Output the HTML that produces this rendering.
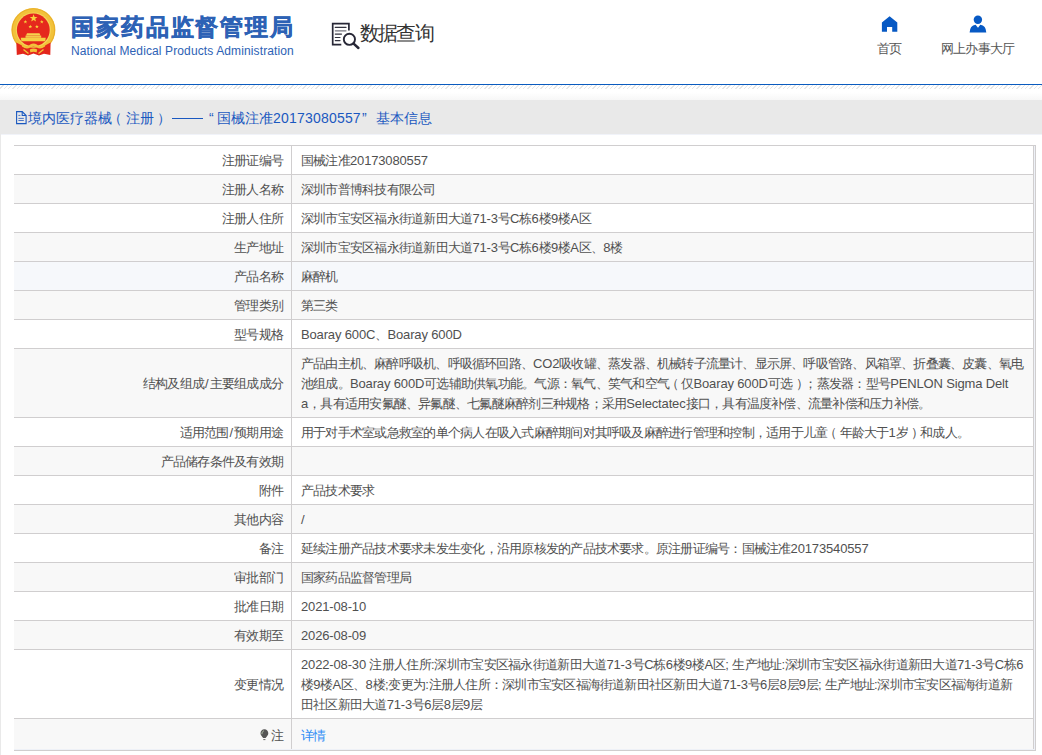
<!DOCTYPE html>
<html><head><meta charset="utf-8">
<style>
*{margin:0;padding:0;box-sizing:border-box}
html,body{width:1042px;height:755px;overflow:hidden;background:#fff}
body{font-family:"Liberation Sans",sans-serif;color:#505050;position:relative}
i{font-style:normal;letter-spacing:-0.15px}
.abs{position:absolute}
#title{left:71px;top:10px;font-size:23px;letter-spacing:1.9px;font-weight:bold;-webkit-text-stroke:0.5px #2d62b5;color:#2d62b5;white-space:nowrap;line-height:34px}
#sub{left:71px;top:43px;font-size:12px;letter-spacing:0.12px;color:#2d62b5;white-space:nowrap;line-height:16px}
#dq{left:359.7px;top:18px;font-size:20px;letter-spacing:-1.6px;color:#333;white-space:nowrap;line-height:30px}
.nav{font-size:13px;letter-spacing:-0.76px;color:#555;white-space:nowrap;line-height:16px}
#blue{left:0;top:84px;width:1042px;height:1px;background:#0a5bbf}
#hatch{left:0;top:85px;width:1042px;height:4px;
 background:repeating-linear-gradient(135deg,#fff 0,#fff 2.1px,#e6e6e6 2.1px,#e6e6e6 3.06px)}
#grad{left:0;top:89px;width:1042px;height:11px;background:linear-gradient(#fff 30%,#f7f7f7)}
#bar{left:0;top:100px;width:1042px;height:34px;background:#e9e9e9}
.bt{top:108px;font-size:14px;color:#1a58c0;white-space:nowrap;line-height:20px}
#bline{left:1px;top:134px;width:1041px;height:1px;background:#f1f3f9}
#lborder{left:0;top:134px;width:1px;height:621px;background:#e9e9e9}
#tbl{background:#eef1f7;left:14px;top:145px;width:1022px;height:606px;border-top:1px solid #d0cecf;border-right:1px solid #d0cecf;border-bottom:1px solid #d0cecf}
.row{position:absolute;background:#fff;left:0;width:1020px;border-bottom:1px solid #d0cecf;font-size:13px;letter-spacing:-0.76px;line-height:20px}
.row.g{background:#f8f8f8}
.row .l{position:absolute;left:0;top:0;width:278px;height:100%;border-right:1px solid #d0cecf;text-align:right;padding:5px 8px 0 0;white-space:nowrap}
.row .v{position:absolute;left:278px;top:0;width:742px;height:100%;border-right:1px solid #d0cecf;padding:5px 0 0 9px;white-space:nowrap}
.row.last{border-bottom:none}
.bulb{display:inline-block;vertical-align:-1px;margin-right:2px}
a{color:#2d8cf5;text-decoration:none}
.row.last .v{padding-top:7px}
b{font-weight:normal}.lp{position:relative;left:-3.5px}.rp{position:relative;left:3.5px}
.row.hv{background:#f6f8fb}

</style></head><body>
<!-- emblem -->
<svg class="abs" style="left:0;top:0" width="64" height="62" viewBox="0 0 64 62">
 <circle cx="33.4" cy="30" r="22" fill="#f2c23a"/>
 <circle cx="33.4" cy="30" r="21.2" fill="none" stroke="#e9ae2a" stroke-width="1"/>
 <circle cx="33.4" cy="30" r="17.6" fill="#f6d257"/>
 <circle cx="33.3" cy="30" r="16.4" fill="#e5281d"/>
 <polygon points="33.6,14.3 34.6,17.0 37.5,17.0 35.2,18.8 36.0,21.6 33.6,19.9 31.2,21.6 32.0,18.8 29.7,17.0 32.6,17.0" fill="#f8d33c"/>
 <polygon points="25.4,20.0 25.9,21.2 27.2,21.2 26.2,22.1 26.6,23.4 25.4,22.6 24.2,23.4 24.6,22.1 23.6,21.2 24.9,21.2" fill="#f8d33c"/>
 <polygon points="41.8,20.0 42.3,21.2 43.6,21.2 42.6,22.1 43.0,23.4 41.8,22.6 40.6,23.4 41.0,22.1 40.0,21.2 41.3,21.2" fill="#f8d33c"/>
 <polygon points="30.3,24.8 30.8,26.0 32.1,26.0 31.1,26.9 31.5,28.2 30.3,27.4 29.1,28.2 29.5,26.9 28.5,26.0 29.8,26.0" fill="#f8d33c"/>
 <polygon points="36.9,24.8 37.4,26.0 38.7,26.0 37.7,26.9 38.1,28.2 36.9,27.4 35.7,28.2 36.1,26.9 35.1,26.0 36.4,26.0" fill="#f8d33c"/>
 <path d="M27 33.3 H39.5 L40.5 35.6 H26 Z" fill="#f6d54e"/>
 <path d="M25.5 35.6 H41.2 V37.8 H25.5 Z" fill="#f3c94a"/>
 <path d="M20.8 37.8 H45.8 L45.2 41.2 H21.4 Z" fill="#f5d044"/>
 <path d="M16.3 42.5 Q25 47.8 33.5 47.8 Q42 47.8 50.6 42.5 L50.3 55 L44 53.8 L39 55.4 L33.5 53.6 L28 55.4 L23 53.8 L16.8 55 Z" fill="#e3261c"/>
 <path d="M21.5 44.2 Q27 48 30.2 44.6 Q33.5 42.2 36.8 44.6 Q40 48 45.5 44.2 L45 46.6 Q40 50 36.8 47.2 Q33.5 45.2 30.2 47.2 Q27 50 22 46.6 Z" fill="#f2c23a"/>
 <path d="M29.8 49.6 Q33.5 47.6 37.2 49.6 L36.6 52.4 Q33.5 51 30.4 52.4 Z" fill="#f2c23a"/>
 <path d="M23.5 49.5 L28.5 53.5 M43.5 49.5 L38.5 53.5" stroke="#f2c23a" stroke-width="1.4"/>
</svg>
<div id="title" class="abs">国家药品监督管理局</div>
<div id="sub" class="abs">National Medical Products Administration</div>

<!-- data query icon -->
<svg class="abs" style="left:326px;top:16px" width="40" height="40" viewBox="326 16 40 40">
 <path d="M348.9 30.5 V23.6 H332.7 V44.6 H341.3" fill="none" stroke="#272736" stroke-width="1.7"/>
 <path d="M335.3 27.4 H346 M335.3 34.1 H341.5 M335.3 37.5 H340 M335.3 40.6 H340" stroke="#33333f" stroke-width="1.2" stroke-linecap="round"/>
 <path d="M335.3 30.8 H346" stroke="#777780" stroke-width="1.2" stroke-linecap="round"/>
 <circle cx="349.4" cy="39.3" r="5.6" fill="none" stroke="#272736" stroke-width="1.9"/>
 <path d="M353.6 43.6 L358.4 48" stroke="#272736" stroke-width="2.5" stroke-linecap="round"/>
</svg>
<div id="dq" class="abs">数据查询</div>

<!-- nav -->
<svg class="abs" style="left:880px;top:14px" width="20" height="20" viewBox="880 14 20 20">
 <path d="M889.6 16.2 L897.3 22.4 V31.8 H892.2 V26.9 H887 V31.8 H881.9 V22.4 Z" fill="#0759c4"/>
</svg>
<div class="abs nav" style="left:877px;top:41px">首页</div>
<svg class="abs" style="left:966px;top:12px" width="24" height="24" viewBox="966 12 24 24">
 <circle cx="977.9" cy="19.8" r="4.2" fill="#0759c4"/>
 <path d="M969.6 32.6 Q969.9 25.2 975.6 24.7 L978 27.8 L980.3 24.7 Q986 25.2 986.3 32.6 Z" fill="#0759c4"/>
</svg>
<div class="abs nav" style="left:941px;top:41px">网上办事大厅</div>

<div id="blue" class="abs"></div>
<div id="hatch" class="abs"></div>
<div id="grad" class="abs"></div>
<div id="bar" class="abs"></div>
<svg class="abs" style="left:15px;top:111px" width="12" height="14" viewBox="0 0 12 14">
 <path d="M1.6 0.6 H7.2 L11.1 4.5 V12.6 H1.6 Z" fill="none" stroke="#1a58c0" stroke-width="1.1"/>
 <path d="M7.2 0.6 V4.5 H11.1" fill="none" stroke="#1a58c0" stroke-width="1.1"/>
 <path d="M3.4 4.4 H5.4 M3.4 7.4 H8.8 M3.4 9.5 H8.8" stroke="#3a66c0" stroke-width="0.9"/>
</svg>
<div class="abs bt" style="left:28px">境内医疗器械</div>
<div class="abs bt" style="left:108px">（</div>
<div class="abs bt" style="left:126px">注册</div>
<div class="abs bt" style="left:156.5px">）</div>
<div class="abs" style="left:172px;top:118px;width:31px;height:1px;background:#1a58c0"></div>
<div class="abs bt" style="left:209px">“</div>
<div class="abs bt" style="left:217px" id="btnum">国械注准<i style="letter-spacing:.2px">20173080557</i></div>
<div class="abs bt" style="left:362px">”</div>
<div class="abs bt" style="left:376px">基本信息</div>
<div id="bline" class="abs"></div>
<div id="lborder" class="abs"></div>

<div id="tbl" class="abs">
<div class="row" style="top:0px;height:29px"><div class="l" style="padding-top:5px"><span id="l0">注册证编号</span></div><div class="v"><span class="ln" id="r0_0">国械注准<i>20173080557</i></span></div></div>
<div class="row g" style="top:29px;height:29px"><div class="l" style="padding-top:5px"><span id="l1">注册人名称</span></div><div class="v"><span class="ln" id="r1_0">深圳市普博科技有限公司</span></div></div>
<div class="row" style="top:58px;height:29px"><div class="l" style="padding-top:5px"><span id="l2">注册人住所</span></div><div class="v"><span class="ln" id="r2_0">深圳市宝安区福永街道新田大道<i>71-3</i>号<i>C</i>栋<i>6</i>楼<i>9</i>楼<i>A</i>区</span></div></div>
<div class="row g" style="top:87px;height:29px"><div class="l" style="padding-top:5px"><span id="l3">生产地址</span></div><div class="v"><span class="ln" id="r3_0">深圳市宝安区福永街道新田大道<i>71-3</i>号<i>C</i>栋<i>6</i>楼<i>9</i>楼<i>A</i>区、<i>8</i>楼</span></div></div>
<div class="row hv" style="top:116px;height:29px"><div class="l" style="padding-top:5px"><span id="l4">产品名称</span></div><div class="v"><span class="ln" id="r4_0">麻醉机</span></div></div>
<div class="row g" style="top:145px;height:29px"><div class="l" style="padding-top:5px"><span id="l5">管理类别</span></div><div class="v"><span class="ln" id="r5_0">第三类</span></div></div>
<div class="row" style="top:174px;height:29px"><div class="l" style="padding-top:5px"><span id="l6">型号规格</span></div><div class="v"><span class="ln" id="r6_0"><i>Boaray 600C</i>、<i>Boaray 600D</i></span></div></div>
<div class="row g" style="top:203px;height:69px"><div class="l" style="padding-top:25px"><span id="l7">结构及组成<i style="margin:0 1px">/</i>主要组成成分</span></div><div class="v"><span class="ln" id="r7_0" style="letter-spacing:-0.790px">产品由主机、麻醉呼吸机、呼吸循环回路、<i>CO2</i>吸收罐、蒸发器、机械转子流量计、显示屏、呼吸管路、风箱罩、折叠囊、皮囊、氧电</span><br><span class="ln" id="r7_1">池组成。<i>Boaray 600D</i>可选辅助供氧功能。气源：氧气、笑气和空气<b class="lp">（</b>仅<i>Boaray 600D</i>可选<b class="rp">）</b>；蒸发器：型号<i>PENLON Sigma Delt</i></span><br><span class="ln" id="r7_2"><i>a</i>，具有适用安氟醚、异氟醚、七氟醚麻醉剂三种规格；采用<i>Selectatec</i>接口，具有温度补偿、流量补偿和压力补偿。</span></div></div>
<div class="row" style="top:272px;height:29px"><div class="l" style="padding-top:5px"><span id="l8">适用范围<i style="margin:0 1px">/</i>预期用途</span></div><div class="v"><span class="ln" id="r8_0">用于对手术室或急救室的单个病人在吸入式麻醉期间对其呼吸及麻醉进行管理和控制，适用于儿童<b class="lp">（</b>年龄大于<i>1</i>岁<b class="rp">）</b>和成人。</span></div></div>
<div class="row g" style="top:301px;height:29px"><div class="l" style="padding-top:5px"><span id="l9">产品储存条件及有效期</span></div><div class="v"><span class="ln" id="r9_0"></span></div></div>
<div class="row" style="top:330px;height:29px"><div class="l" style="padding-top:5px"><span id="l10">附件</span></div><div class="v"><span class="ln" id="r10_0">产品技术要求</span></div></div>
<div class="row g" style="top:359px;height:29px"><div class="l" style="padding-top:5px"><span id="l11">其他内容</span></div><div class="v"><span class="ln" id="r11_0"><i>/</i></span></div></div>
<div class="row" style="top:388px;height:29px"><div class="l" style="padding-top:5px"><span id="l12">备注</span></div><div class="v"><span class="ln" id="r12_0">延续注册产品技术要求未发生变化，沿用原核发的产品技术要求。原注册证编号：国械注准<i>20173540557</i></span></div></div>
<div class="row g" style="top:417px;height:29px"><div class="l" style="padding-top:5px"><span id="l13">审批部门</span></div><div class="v"><span class="ln" id="r13_0">国家药品监督管理局</span></div></div>
<div class="row" style="top:446px;height:29px"><div class="l" style="padding-top:5px"><span id="l14">批准日期</span></div><div class="v"><span class="ln" id="r14_0"><i>2021-08-10</i></span></div></div>
<div class="row g" style="top:475px;height:29px"><div class="l" style="padding-top:5px"><span id="l15">有效期至</span></div><div class="v"><span class="ln" id="r15_0"><i>2026-08-09</i></span></div></div>
<div class="row" style="top:504px;height:69px"><div class="l" style="padding-top:25px"><span id="l16">变更情况</span></div><div class="v"><span class="ln" id="r16_0" style="letter-spacing:-0.710px"><i>2022-08-30 </i>注册人住所<i>:</i>深圳市宝安区福永街道新田大道<i>71-3</i>号<i>C</i>栋<i>6</i>楼<i>9</i>楼<i>A</i>区<i>; </i>生产地址<i>:</i>深圳市宝安区福永街道新田大道<i>71-3</i>号<i>C</i>栋<i>6</i></span><br><span class="ln" id="r16_1">楼<i>9</i>楼<i>A</i>区、<i>8</i>楼<i>;</i>变更为<i>:</i>注册人住所：深圳市宝安区福海街道新田社区新田大道<i>71-3</i>号<i>6</i>层<i>8</i>层<i>9</i>层<i>; </i>生产地址<i>:</i>深圳市宝安区福海街道新</span><br><span class="ln" id="r16_2">田社区新田大道<i>71-3</i>号<i>6</i>层<i>8</i>层<i>9</i>层</span></div></div>
<div class="row g last" style="top:573px;height:30px"><div class="l" style="padding-top:7px"><span id="l17"><svg class="bulb" width="9" height="12" viewBox="0 0 9 12"><path d="M4.4 0.3 C6.7 0.3 8.3 2 8.3 4.3 C8.3 6.4 6.6 7.6 5.6 8.9 L3.2 8.9 C2.2 7.6 0.5 6.4 0.5 4.3 C0.5 2 2.1 0.3 4.4 0.3 Z" fill="#555"/><path d="M3.3 10.6 H5.4" stroke="#666" stroke-width="1"/><path d="M1.9 5.2 C1.9 3.4 2.6 2.3 3.8 1.8" stroke="#b8c8b0" stroke-width="0.9" fill="none"/></svg>注</span></div><div class="v"><a>详情</a></div></div>
</div>
</body></html>
